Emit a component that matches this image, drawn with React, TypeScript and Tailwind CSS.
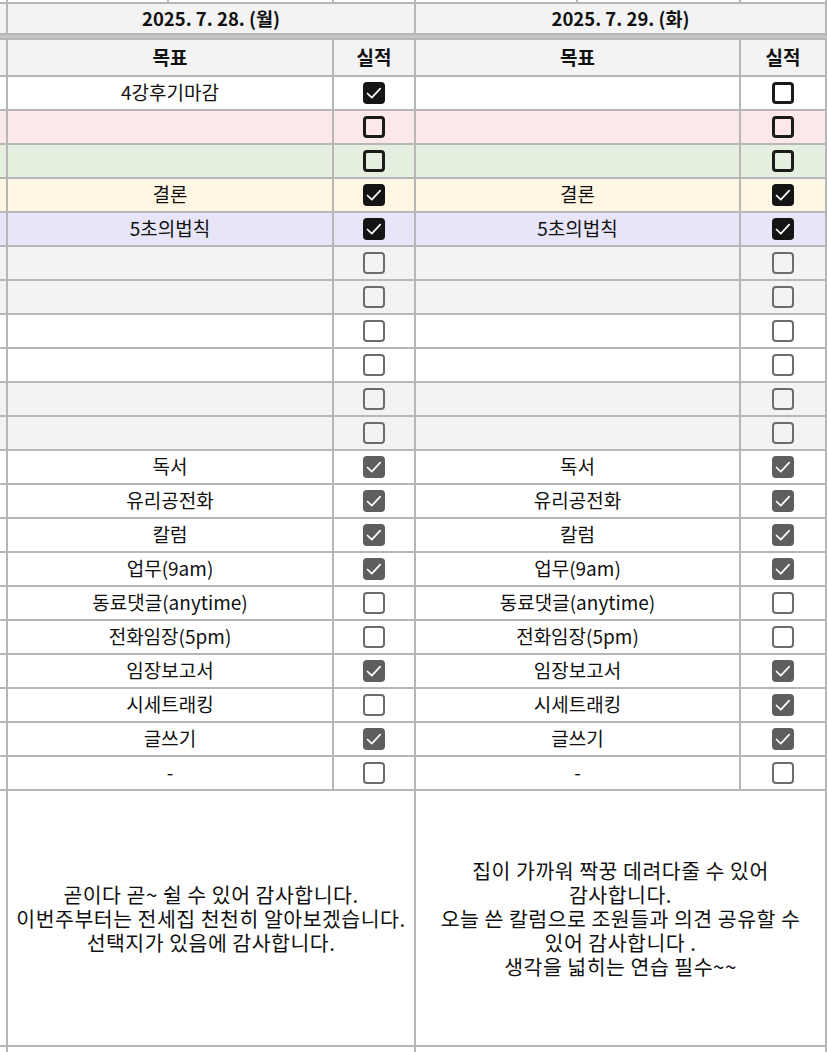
import React from 'react';

type Tone = 'dark' | 'gray';

interface Row {
  bg: string;
  tone: Tone;
  left: string;
  leftOn: boolean;
  right: string;
  rightOn: boolean;
}

const rows: Row[] = [
  { bg: 'bg-white', tone: 'dark', left: '4강후기마감', leftOn: true, right: '', rightOn: false },
  { bg: 'bg-[#fce8e8]', tone: 'dark', left: '', leftOn: false, right: '', rightOn: false },
  { bg: 'bg-[#e5efe0]', tone: 'dark', left: '', leftOn: false, right: '', rightOn: false },
  { bg: 'bg-[#fff7e3]', tone: 'dark', left: '결론', leftOn: true, right: '결론', rightOn: true },
  { bg: 'bg-[#e7e5f7]', tone: 'dark', left: '5초의법칙', leftOn: true, right: '5초의법칙', rightOn: true },
  { bg: 'bg-[#f3f3f3]', tone: 'gray', left: '', leftOn: false, right: '', rightOn: false },
  { bg: 'bg-[#f3f3f3]', tone: 'gray', left: '', leftOn: false, right: '', rightOn: false },
  { bg: 'bg-white', tone: 'gray', left: '', leftOn: false, right: '', rightOn: false },
  { bg: 'bg-white', tone: 'gray', left: '', leftOn: false, right: '', rightOn: false },
  { bg: 'bg-[#f3f3f3]', tone: 'gray', left: '', leftOn: false, right: '', rightOn: false },
  { bg: 'bg-[#f3f3f3]', tone: 'gray', left: '', leftOn: false, right: '', rightOn: false },
  { bg: 'bg-white', tone: 'gray', left: '독서', leftOn: true, right: '독서', rightOn: true },
  { bg: 'bg-white', tone: 'gray', left: '유리공전화', leftOn: true, right: '유리공전화', rightOn: true },
  { bg: 'bg-white', tone: 'gray', left: '칼럼', leftOn: true, right: '칼럼', rightOn: true },
  { bg: 'bg-white', tone: 'gray', left: '업무(9am)', leftOn: true, right: '업무(9am)', rightOn: true },
  { bg: 'bg-white', tone: 'gray', left: '동료댓글(anytime)', leftOn: false, right: '동료댓글(anytime)', rightOn: false },
  { bg: 'bg-white', tone: 'gray', left: '전화임장(5pm)', leftOn: false, right: '전화임장(5pm)', rightOn: false },
  { bg: 'bg-white', tone: 'gray', left: '임장보고서', leftOn: true, right: '임장보고서', rightOn: true },
  { bg: 'bg-white', tone: 'gray', left: '시세트래킹', leftOn: false, right: '시세트래킹', rightOn: true },
  { bg: 'bg-white', tone: 'gray', left: '글쓰기', leftOn: true, right: '글쓰기', rightOn: true },
  { bg: 'bg-white', tone: 'gray', left: '-', leftOn: false, right: '-', rightOn: false },
];

const COLS = 'grid grid-cols-[6px_324px_80px_323px_84px] gap-x-[2px] pr-[2px]';

function CheckBox({ on, tone }: { on: boolean; tone: Tone }) {
  if (on) {
    return (
      <div
        className={
          tone === 'dark'
            ? 'flex size-[22px] items-center justify-center rounded-[4px] bg-[#141414]'
            : 'flex size-[22px] items-center justify-center rounded-[4px] bg-[#5e5e5e]'
        }
      >
        <svg width="22" height="22" viewBox="0 0 22 22" fill="none">
          <path d="M4.5 11.5 L8.8 15.6 L17.2 6.6" stroke="white" strokeWidth="1.7" strokeLinecap="round" strokeLinejoin="round" />
        </svg>
      </div>
    );
  }
  return (
    <div
      className={
        tone === 'dark'
          ? 'size-[22px] rounded-[4px] border-[3px] border-[#1a1a1a]'
          : 'size-[22px] rounded-[4px] border-[2.5px] border-[#6c6c6c]'
      }
    />
  );
}

export default function App() {
  return (
    <div className="flex h-[1052px] w-[827px] flex-col gap-[2px] overflow-hidden bg-[#b7b7b7] font-['Noto_Sans_CJK_KR','Noto_Sans',sans-serif] text-[#111]">
      {/* row cut off above */}
      <div className={`${COLS} h-[2px]`}>
        <div className="bg-white" />
        <div className="flex gap-[2px]">
          <div className="w-[159px] bg-white" />
          <div className="flex-1 bg-white" />
        </div>
        <div className="bg-white" />
        <div className="flex gap-[2px]">
          <div className="w-[160px] bg-white" />
          <div className="flex-1 bg-white" />
        </div>
        <div className="bg-white" />
      </div>

      {/* dates */}
      <div className={`${COLS} h-[29px] text-[18.5px] font-bold`}>
        <div className="bg-[#f3f3f3]" />
        <div className="col-span-2 flex items-center justify-center bg-[#f3f3f3]">2025. 7. 28. (월)</div>
        <div className="col-span-2 flex items-center justify-center bg-[#f3f3f3]">2025. 7. 29. (화)</div>
      </div>

      {/* frozen row divider */}
      <div className="h-[3px] bg-[#c3c3c3]" />

      {/* header */}
      <div className={`${COLS} h-[35px] text-[19px] font-bold`}>
        <div className="bg-[#f3f3f3]" />
        <div className="flex items-center justify-center bg-[#f3f3f3]">목표</div>
        <div className="flex items-center justify-center bg-[#f3f3f3]">실적</div>
        <div className="flex items-center justify-center bg-[#f3f3f3]">목표</div>
        <div className="flex items-center justify-center bg-[#f3f3f3]">실적</div>
      </div>

      {rows.map((r, i) => (
        <div key={i} className={`${COLS} h-[32px] text-[19px]`}>
          <div className={r.bg} />
          <div className={`${r.bg} flex items-center justify-center pb-[2px]`}>{r.left}</div>
          <div className={`${r.bg} flex items-center justify-center`}>
            <CheckBox on={r.leftOn} tone={r.tone} />
          </div>
          <div className={`${r.bg} flex items-center justify-center pb-[2px]`}>{r.right}</div>
          <div className={`${r.bg} flex items-center justify-center`}>
            <CheckBox on={r.rightOn} tone={r.tone} />
          </div>
        </div>
      ))}

      {/* daily notes */}
      <div className={`${COLS} h-[254px] text-[20.5px] leading-[24px] tracking-[0.5px]`}>
        <div className="bg-white" />
        <div className="col-span-2 flex flex-col items-center justify-center whitespace-nowrap bg-white">
          <span>곧이다 곧~ 쉴 수 있어 감사합니다.</span>
          <span>이번주부터는 전세집 천천히 알아보겠습니다.</span>
          <span>선택지가 있음에 감사합니다.</span>
        </div>
        <div className="col-span-2 flex flex-col items-center justify-center whitespace-nowrap bg-white">
          <span>집이 가까워 짝꿍 데려다줄 수 있어</span>
          <span>감사합니다.</span>
          <span>오늘 쓴 칼럼으로 조원들과 의견 공유할 수</span>
          <span>있어 감사합니다 .</span>
          <span>생각을 넓히는 연습 필수~~</span>
        </div>
      </div>

      <div className={`${COLS} flex-1`}>
        <div className="bg-white" />
        <div className="col-span-2 bg-white" />
        <div className="col-span-2 bg-white" />
      </div>
    </div>
  );
}
